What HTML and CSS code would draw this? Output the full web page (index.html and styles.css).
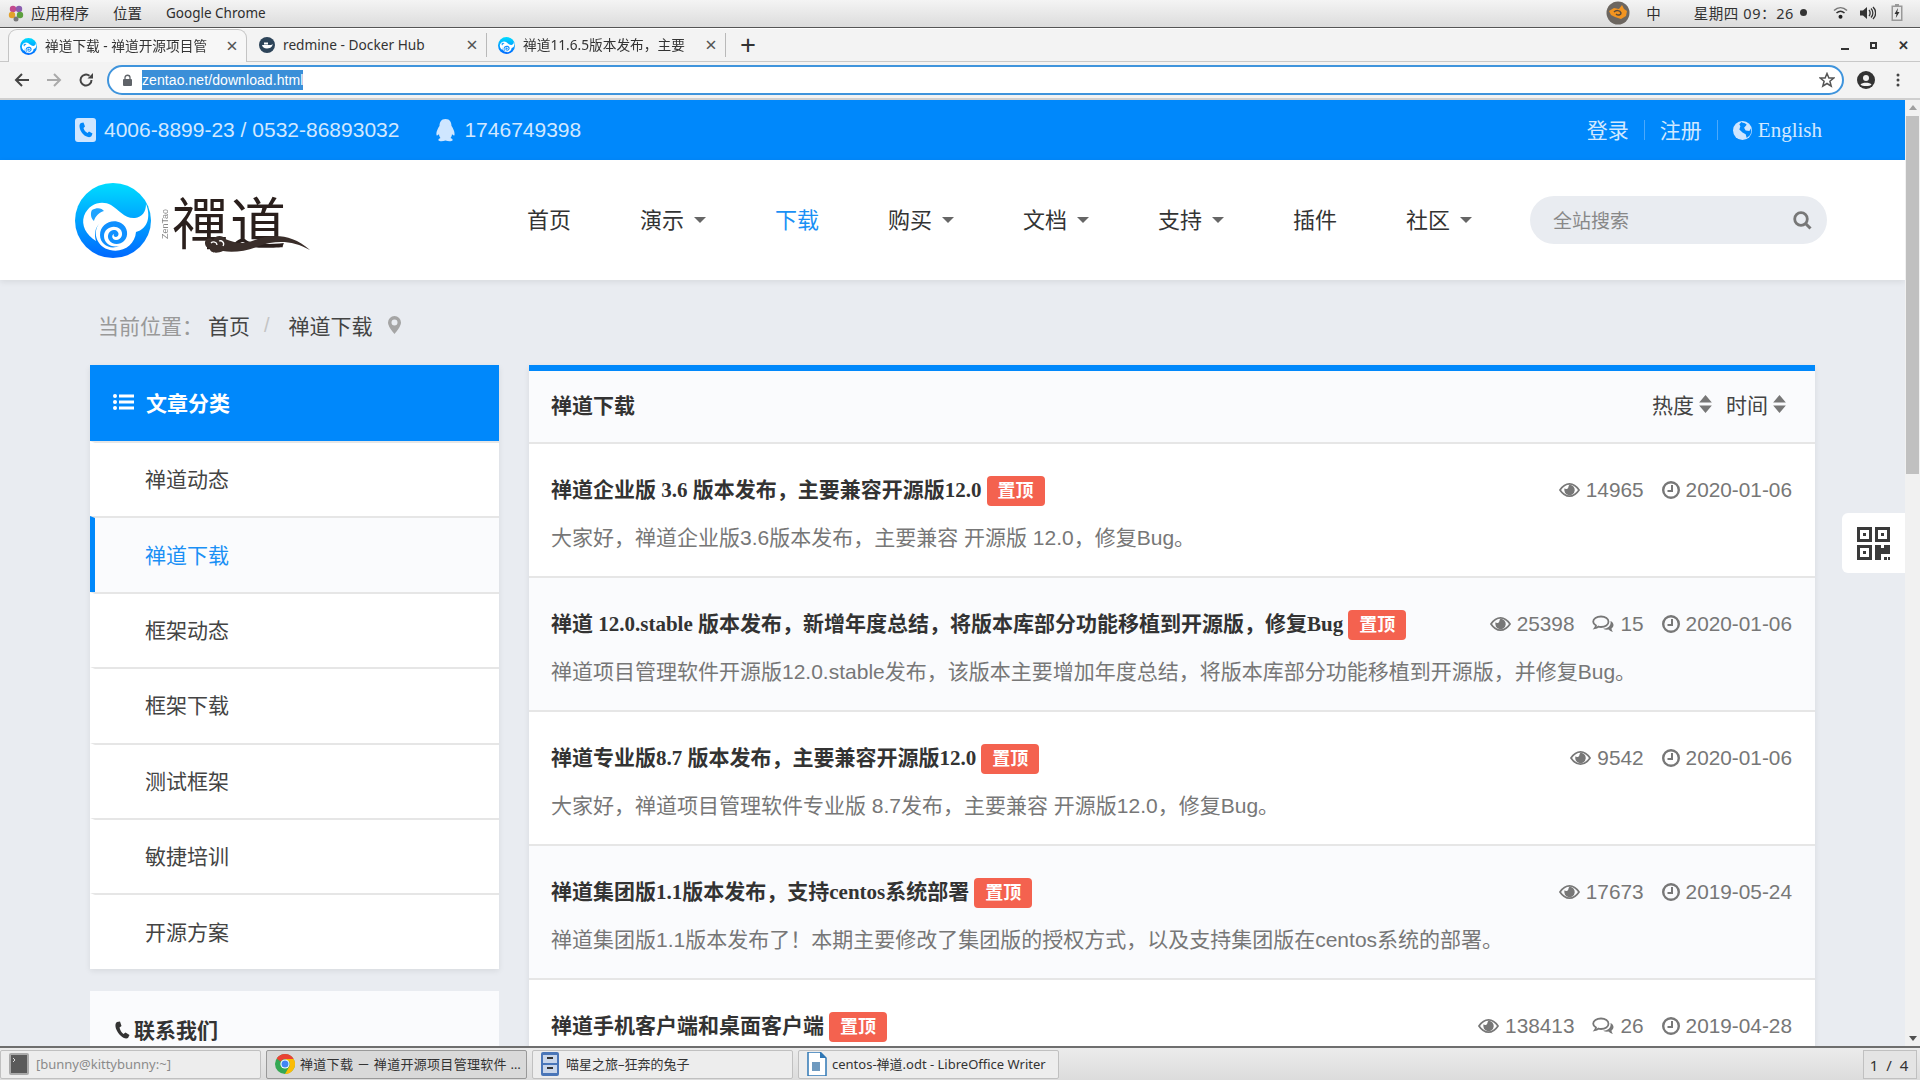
FILE: index.html
```html
<!DOCTYPE html>
<html lang="zh-CN">
<head>
<meta charset="utf-8">
<title>禅道下载</title>
<link rel="stylesheet" href="styles.css">
</head>
<body>
<svg class="defs" width="0" height="0" aria-hidden="true">
  <defs>
    <linearGradient id="zt" x1="0" y1="0" x2="0" y2="1">
      <stop offset="0" stop-color="#00dcff"/><stop offset="1" stop-color="#0068ff"/>
    </linearGradient>
    <symbol id="zt-logo" viewBox="0 0 76 75">
      <ellipse cx="38" cy="37.5" rx="38" ry="37.5" fill="url(#zt)"/>
      <path d="M9 33C14 20 27 17 36 22C44 27 50 36 60 35C67 34 71 29 71 21C76 33 73 46 61 49C60 62 48 70 35 67C22 64 17 50 24 41C20 45 19 52 21 58C11 52 6 42 9 33Z" fill="#fff"/>
      <path d="M17 27C22 24 27 25 29 28C25 29 20 33 19 38C16 36 15 30 17 27Z" fill="#20a4ff"/>
      <path d="M25 52C25 41 37 35 46 40C53 44 54 53 49 58C45 62 37 62 34 57C31 52 35 46 40 47C44 48 45 53 41 54C39 54 38 52 39 51C36 52 37 57 41 57C47 57 49 50 45 46C39 41 29 45 29 53C29 60 36 65 44 63C36 67 25 62 25 52Z" fill="#1090ff"/>
    </symbol>
    <symbol id="i-eye" viewBox="0 0 22 16">
      <path d="M1 8C4 3.500 7.500 1.500 11 1.500S18 3.500 21 8C18 12.500 14.500 14.500 11 14.500S4 12.500 1 8Z" fill="none" stroke="currentColor" stroke-width="1.800"/>
      <path d="M11 2.500A5.500 5.500 0 1 1 5.800 6.200C6.500 7.300 8.700 7.300 9.500 5.800C10 4.800 10 3.500 11 2.500Z" fill="currentColor"/>
    </symbol>
    <symbol id="i-chat" viewBox="0 0 22 18">
      <path d="M9 1.500C13.400 1.500 16.500 3.800 16.500 6.700S13.400 12 9 12C8 12 7.200 11.900 6.300 11.600C5.300 12.500 4 13 2.800 13.200C3.500 12.300 3.900 11.400 4 10.500C2.300 9.500 1.200 8.200 1.200 6.700C1.200 3.800 4.600 1.500 9 1.500Z" fill="none" stroke="currentColor" stroke-width="1.800"/>
      <path d="M18.500 6C20.500 7 21.500 8.500 21.500 10C21.500 11.500 20.700 12.600 19.500 13.500C19.600 14.800 20.200 16 21 17C19 16.600 17.500 15.700 16.500 14.600C15 14.900 12.700 14.700 11 13.700C15.500 13.800 19.500 11 18.500 6Z" fill="currentColor"/>
    </symbol>
    <symbol id="i-clock" viewBox="0 0 18 18">
      <circle cx="9" cy="9" r="7.800" fill="none" stroke="currentColor" stroke-width="2.400"/>
      <path d="M10 4V10H5.500" fill="none" stroke="currentColor" stroke-width="2"/>
    </symbol>
    <symbol id="i-sort" viewBox="0 0 12 17">
      <path d="M6 0L12 7H0ZM0 10H12L6 17Z" fill="currentColor"/>
    </symbol>
    <symbol id="f-chrome" viewBox="0 0 20 20">
      <circle cx="10" cy="10" r="10" fill="#34a853"/>
      <path d="M10 0A10 10 0 0 1 18.700 5H10A5 5 0 0 0 5.600 7.600L1.600 4.600A10 10 0 0 1 10 0Z" fill="#ea4335"/>
      <path d="M18.700 5A10 10 0 0 1 10 20L14.300 12.500A5 5 0 0 0 14.300 7.500L10 5Z" fill="#fbbc05"/>
      <circle cx="10" cy="10" r="4.600" fill="#fff"/><circle cx="10" cy="10" r="3.500" fill="#4285f4"/>
    </symbol>
  </defs>
</svg>

<header class="gnome">
  <div class="gnome-left">
    <svg class="foot" width="16" height="18" viewBox="0 0 16 18"><circle cx="5" cy="5" r="3.200" fill="#c34a8e"/><circle cx="11" cy="5" r="3.200" fill="#8a5db0"/><circle cx="4" cy="11" r="3.200" fill="#e2a12b"/><circle cx="12" cy="11" r="3.200" fill="#5c9f3d"/><circle cx="8" cy="15" r="2.500" fill="#777"/></svg>
    <span class="gnome-menu">应用程序</span>
    <span class="gnome-menu">位置</span>
    <span class="gnome-menu gnome-app">Google Chrome</span>
  </div>
  <div class="gnome-right">
    <svg class="tray-avatar" width="24" height="24" viewBox="0 0 24 24"><circle cx="12" cy="12" r="11.500" fill="#6c6660"/><path d="M3 10L8 7L13 8L16 4L18 8L21 10L20 15L15 18L9 16L5 14Z" fill="#f29420"/><path d="M8 11C10 9 14 9 15 12C15 14 12 15 10 13" fill="none" stroke="#5a4a3a" stroke-width="1.500"/></svg>
    <span class="tray-ime">中</span>
    <span class="tray-clock">星期四 09：26</span>
    <span class="tray-dot"></span>
    <svg class="tray-wifi" width="15" height="13" viewBox="0 0 15 13"><path d="M1 4.500C5 .8 10 .8 14 4.500" fill="none" stroke="#777" stroke-width="1.500"/><path d="M3.500 7C6 4.800 9 4.800 11.500 7" fill="none" stroke="#333" stroke-width="1.600"/><circle cx="7.500" cy="10.800" r="2" fill="#222"/></svg>
    <svg class="tray-sound" width="16" height="14" viewBox="0 0 16 14"><path d="M0 4.500H3L7 1V13L3 9.500H0Z" fill="#333"/><path d="M9 4C10.500 5.500 10.500 8.500 9 10M11 2.500C13.500 5 13.500 9 11 11.500M13 1C16.500 4.500 16.500 9.500 13 13" fill="none" stroke="#333" stroke-width="1.300"/></svg>
    <svg class="tray-battery" width="12" height="17" viewBox="0 0 12 17"><path d="M4 0H8V1.500H11.500V17H.5V1.500H4Z" fill="#999"/><rect x="2" y="3" width="8" height="12.500" fill="#e8e8e8"/><path d="M7 4L3.500 10H5.500L4.800 14L8.500 8H6.300Z" fill="#333"/></svg>
  </div>
</header>

<div class="chrome">
  <div class="tabstrip">
    <div class="tab tab-active">
      <svg class="favicon" width="17" height="17"><use href="#zt-logo"/></svg>
      <span class="tab-title tab-fade">禅道下载 - 禅道开源项目管</span>
      <span class="tab-x">×</span>
    </div>
    <div class="tab tab-two">
      <svg class="favicon" width="16" height="16" viewBox="0 0 16 16"><circle cx="8" cy="8" r="8" fill="#2d4459"/><path d="M3 8H11.500C12.500 8 13 7.500 13.500 7C13.800 8.500 12.500 11.500 8 11.500C5 11.500 3.500 10 3 8Z" fill="#fff"/><rect x="5" y="5.500" width="4" height="2" fill="#fff"/></svg>
      <span class="tab-title">redmine - Docker Hub</span>
      <span class="tab-x">×</span>
    </div>
    <div class="tab tab-three">
      <svg class="favicon" width="17" height="17"><use href="#zt-logo"/></svg>
      <span class="tab-title tab-fade">禅道11.6.5版本发布，主要</span>
      <span class="tab-x">×</span>
    </div>
    <span class="tab-new">+</span>
    <div class="winbtns">
      <span class="win-min"></span>
      <span class="win-max"></span>
      <span class="win-close">✕</span>
    </div>
  </div>
  <div class="toolbar">
    <svg class="tool-back" width="16" height="16" viewBox="0 0 16 16"><path d="M15 8H2M8 2L2 8L8 14" fill="none" stroke="#444" stroke-width="2"/></svg>
    <svg class="tool-fwd" width="16" height="16" viewBox="0 0 16 16"><path d="M1 8H14M8 2L14 8L8 14" fill="none" stroke="#aaa" stroke-width="2"/></svg>
    <svg class="tool-reload" width="16" height="16" viewBox="0 0 16 16"><path d="M13.500 8A5.500 5.500 0 1 1 11.500 3.800" fill="none" stroke="#444" stroke-width="2"/><path d="M9.500 6.500H15V1Z" fill="#444"/></svg>
    <div class="omnibox">
      <svg class="lock" width="9" height="12" viewBox="0 0 9 12"><path d="M2 5V3.500C2 .5 7 .5 7 3.500V5" fill="none" stroke="#5f6368" stroke-width="1.300"/><rect y="5" width="9" height="7" rx="1" fill="#5f6368"/></svg>
      <span class="url">zentao.net/download.html</span>
      <svg class="star" width="16" height="16" viewBox="0 0 16 16"><path d="M8 1.500L9.900 6H14.800L10.900 9.200L12.200 14.200L8 11.500L3.800 14.200L5.100 9.200L1.200 6H6.100Z" fill="none" stroke="#555" stroke-width="1.500"/></svg>
    </div>
    <svg class="tool-user" width="18" height="18" viewBox="0 0 18 18"><circle cx="9" cy="9" r="9" fill="#333"/><circle cx="9" cy="7" r="3" fill="#f2f2f2"/><path d="M3.500 13.500C5 11 13 11 14.500 13.500C13 15.500 5 15.500 3.500 13.500Z" fill="#f2f2f2"/></svg>
    <svg class="tool-menu" width="4" height="14" viewBox="0 0 4 14"><circle cx="2" cy="2" r="1.500" fill="#444"/><circle cx="2" cy="7" r="1.500" fill="#444"/><circle cx="2" cy="12" r="1.500" fill="#444"/></svg>
  </div>
</div>

<div class="viewport">
  <div class="page">
    <div class="utilbar">
      <div class="util-left">
        <svg class="u-icon" width="21" height="24" viewBox="0 0 21 24"><rect width="21" height="24" rx="3" fill="#cfe6ff"/><path d="M6 5L8.500 4.500L10 8.500L8.500 10C9 12 10.500 14 12.500 15L14 13.500L17.500 15.500L16.500 18C15.500 19.500 13 19.500 10.500 18C7 16 4.500 11.500 4.500 8C4.500 6.500 5 5.500 6 5Z" fill="#0088fb"/></svg>
        <span class="u-phone">4006-8899-23 / 0532-86893032</span>
        <svg class="u-icon u-qq" width="21" height="24" viewBox="0 0 21 24"><path d="M10.500 1C15 1 16.500 4.500 16.500 8C18 10 20 14 19.500 17C19 18.500 17.500 16.500 17 16C17 18 16 19.500 15.500 20C17 20.500 18 21.500 17.500 22.500C16.500 23.500 13 23.500 10.500 22.500C8 23.500 4.500 23.500 3.500 22.500C3 21.500 4 20.500 5.500 20C5 19.500 4 18 4 16C3.500 16.500 2 18.500 1.500 17C1 14 3 10 4.500 8C4.500 4.500 6 1 10.500 1Z" fill="#cfe6ff"/></svg>
        <span class="u-qqnum">1746749398</span>
      </div>
      <div class="util-right">
        <span class="u-link">登录</span>
        <span class="u-sep"></span>
        <span class="u-link">注册</span>
        <span class="u-sep"></span>
        <svg class="u-globe" width="19" height="19" viewBox="0 0 18 18"><circle cx="9" cy="9" r="9" fill="#cfe6ff"/><path d="M8 1C9.500 2 12 2 13 3.500L10.500 6.500L12 9L15.500 9.500L17 7C17.500 9 17.500 11 16 13.500L13 16L12 12.500L9 11L6 8L7 5L6 3Z" fill="#0088fb"/></svg>
        <span class="u-lang">English</span>
      </div>
    </div>

    <div class="siteheader">
      <div class="logo">
        <svg class="logo-mark" width="76" height="75"><use href="#zt-logo"/></svg>
        <span class="logo-en">ZenTao</span>
        <span class="logo-cn">禪道</span>
        <svg class="logo-cloud" width="108" height="30" viewBox="0 0 108 30"><path d="M2 18C2 13 8 12 10 15C12 10 20 10 22 14C32 18 40 20 52 15C68 9 88 8 107 25C90 15 72 15 56 21C44 26 30 28 20 26C14 29 6 28 7 23C4 23 2 21 2 18Z" fill="#3a2e2a"/><path d="M8 18C10 16 14 17 14 20M16 16C19 15 22 18 20 21" fill="none" stroke="#fff" stroke-width="1.300"/></svg>
      </div>
      <nav class="nav">
        <span class="nav-item">首页</span>
        <span class="nav-item">演示<i class="caret"></i></span>
        <span class="nav-item nav-on">下载</span>
        <span class="nav-item">购买<i class="caret"></i></span>
        <span class="nav-item">文档<i class="caret"></i></span>
        <span class="nav-item">支持<i class="caret"></i></span>
        <span class="nav-item">插件</span>
        <span class="nav-item">社区<i class="caret"></i></span>
      </nav>
      <div class="search">
        <span class="search-ph">全站搜索</span>
        <svg width="19" height="19" viewBox="0 0 19 19"><circle cx="8" cy="8" r="6.300" fill="none" stroke="#777" stroke-width="2.800"/><path d="M12.500 12.500L17.500 17.500" stroke="#777" stroke-width="3"/></svg>
      </div>
    </div>

    <div class="crumbs">
      <span class="crumb-label">当前位置：</span>
      <span class="crumb-link">首页</span>
      <span class="crumb-sep">/</span>
      <span class="crumb-link">禅道下载</span>
      <svg class="crumb-pin" width="13" height="18" viewBox="0 0 13 18"><path fill-rule="evenodd" d="M6.500 0A6.500 6.500 0 0 1 13 6.500C13 10 9 15 6.500 18C4 15 0 10 0 6.500A6.500 6.500 0 0 1 6.500 0ZM6.500 3.500A3 3 0 1 0 6.500 9.500A3 3 0 1 0 6.500 3.500Z" fill="#a5a5a5"/></svg>
    </div>

    <div class="content">
      <aside class="side">
        <div class="card">
          <div class="card-head">
            <svg width="21" height="16" viewBox="0 0 21 16"><circle cx="2" cy="2" r="2" fill="#fff"/><circle cx="2" cy="8" r="2" fill="#fff"/><circle cx="2" cy="14" r="2" fill="#fff"/><rect x="6" y=".5" width="15" height="3" fill="#fff"/><rect x="6" y="6.500" width="15" height="3" fill="#fff"/><rect x="6" y="12.500" width="15" height="3" fill="#fff"/></svg>
            <span>文章分类</span>
          </div>
          <div class="side-item">禅道动态</div>
          <div class="side-item side-on">禅道下载</div>
          <div class="side-item">框架动态</div>
          <div class="side-item">框架下载</div>
          <div class="side-item">测试框架</div>
          <div class="side-item">敏捷培训</div>
          <div class="side-item">开源方案</div>
        </div>
        <div class="contact">
          <svg width="16" height="18" viewBox="0 0 16 18"><path d="M3 1L6 .5L7.500 5L5.500 6.500C6 9 7.500 11.500 9.500 13L11.500 11.500L15.500 14L14 17C12 18 9 17 6.500 14.500C3 11 1 6.500 1.500 3.500C1.700 2.500 2.200 1.500 3 1Z" fill="#333"/></svg>
          <span>联系我们</span>
        </div>
      </aside>

      <main class="list">
        <div class="list-head">
          <span class="list-title">禅道下载</span>
          <div class="sorts">
            <span class="sort">热度<svg class="sort-ic" width="13" height="18"><use href="#i-sort"/></svg></span>
            <span class="sort">时间<svg class="sort-ic" width="13" height="18"><use href="#i-sort"/></svg></span>
          </div>
        </div>

        <article class="post">
          <div class="post-top">
            <h3 class="post-title">禅道企业版 3.6 版本发布，主要兼容开源版12.0</h3><span class="badge">置顶</span>
            <div class="stats">
              <span class="stat"><svg width="21" height="16"><use href="#i-eye"/></svg>14965</span>
              <span class="stat"><svg width="18" height="18"><use href="#i-clock"/></svg>2020-01-06</span>
            </div>
          </div>
          <p class="post-desc">大家好，禅道企业版3.6版本发布，主要兼容 开源版 12.0，修复Bug。</p>
        </article>

        <article class="post">
          <div class="post-top">
            <h3 class="post-title">禅道 12.0.stable 版本发布，新增年度总结，将版本库部分功能移植到开源版，修复Bug</h3><span class="badge">置顶</span>
            <div class="stats">
              <span class="stat"><svg width="21" height="16"><use href="#i-eye"/></svg>25398</span>
              <span class="stat"><svg class="ic-chat" width="22" height="18"><use href="#i-chat"/></svg>15</span>
              <span class="stat"><svg width="18" height="18"><use href="#i-clock"/></svg>2020-01-06</span>
            </div>
          </div>
          <p class="post-desc">禅道项目管理软件开源版12.0.stable发布，该版本主要增加年度总结，将版本库部分功能移植到开源版，并修复Bug。</p>
        </article>

        <article class="post">
          <div class="post-top">
            <h3 class="post-title">禅道专业版8.7 版本发布，主要兼容开源版12.0</h3><span class="badge">置顶</span>
            <div class="stats">
              <span class="stat"><svg width="21" height="16"><use href="#i-eye"/></svg>9542</span>
              <span class="stat"><svg width="18" height="18"><use href="#i-clock"/></svg>2020-01-06</span>
            </div>
          </div>
          <p class="post-desc">大家好，禅道项目管理软件专业版 8.7发布，主要兼容 开源版12.0，修复Bug。</p>
        </article>

        <article class="post">
          <div class="post-top">
            <h3 class="post-title">禅道集团版1.1版本发布，支持centos系统部署</h3><span class="badge">置顶</span>
            <div class="stats">
              <span class="stat"><svg width="21" height="16"><use href="#i-eye"/></svg>17673</span>
              <span class="stat"><svg width="18" height="18"><use href="#i-clock"/></svg>2019-05-24</span>
            </div>
          </div>
          <p class="post-desc">禅道集团版1.1版本发布了！本期主要修改了集团版的授权方式，以及支持集团版在centos系统的部署。</p>
        </article>

        <article class="post">
          <div class="post-top">
            <h3 class="post-title">禅道手机客户端和桌面客户端</h3><span class="badge">置顶</span>
            <div class="stats">
              <span class="stat"><svg width="21" height="16"><use href="#i-eye"/></svg>138413</span>
              <span class="stat"><svg class="ic-chat" width="22" height="18"><use href="#i-chat"/></svg>26</span>
              <span class="stat"><svg width="18" height="18"><use href="#i-clock"/></svg>2019-04-28</span>
            </div>
          </div>
        </article>
      </main>
    </div>

    <div class="qr">
      <svg width="33" height="33" viewBox="0 0 33 33">
        <path fill-rule="evenodd" d="M0 0H15V15H0ZM3 3V12H12V3ZM18 0H33V15H18ZM21 3V12H30V3ZM0 18H15V33H0ZM3 21V30H12V21Z" fill="#3a3a3a"/>
        <path d="M6 6H9V9H6ZM24 6H27V9H24ZM6 24H9V27H6ZM18 18H24V21H27V18H33V27H24V33H18ZM27 30H30V33H27ZM31 30H33V33H31Z" fill="#3a3a3a"/>
      </svg>
    </div>
  </div>
  <div class="scrollbar">
    <span class="sb-up"></span>
    <span class="sb-thumb"></span>
    <span class="sb-down"></span>
  </div>
</div>

<footer class="taskbar">
  <div class="task task-term">
    <svg width="20" height="22" viewBox="0 0 20 22"><rect width="20" height="22" rx="2" fill="#aaa"/><rect x="2" y="2" width="16" height="18" fill="#5a5a5a"/><path d="M4 5L6 7L4 9" fill="none" stroke="#ddd"/></svg>
    <span class="task-dim">[bunny@kittybunny:~]</span>
  </div>
  <div class="task task-on">
    <svg width="20" height="20"><use href="#f-chrome"/></svg>
    <span>禅道下载 － 禅道开源项目管理软件 …</span>
  </div>
  <div class="task task-files">
    <svg width="18" height="24" viewBox="0 0 18 24"><rect width="18" height="24" rx="2" fill="#4a76b8"/><rect x="2" y="3" width="14" height="8" fill="#c9d6ea"/><rect x="2" y="13" width="14" height="8" fill="#c9d6ea"/><rect x="6" y="5" width="6" height="2" fill="#333"/><rect x="6" y="15" width="6" height="2" fill="#333"/></svg>
    <span>喵星之旅–狂奔的兔子</span>
  </div>
  <div class="task">
    <svg width="20" height="24" viewBox="0 0 20 24"><path d="M1 0H13L19 6V24H1Z" fill="#fff" stroke="#2f77b5" stroke-width="1.500"/><path d="M13 0L19 6H13Z" fill="#2f77b5"/><rect x="5" y="10" width="8" height="9" fill="#6f9abf"/></svg>
    <span>centos-禅道.odt - LibreOffice Writer</span>
  </div>
  <span class="pager">1 / 4</span>
</footer>
</body>
</html>
```
FILE: styles.css
```css
* { box-sizing: border-box; }
html, body { margin: 0; height: 100%; overflow: hidden; }
body {
  display: flex;
  flex-direction: column;
  height: 1080px;
  font-family: "Liberation Sans", "Noto Sans CJK SC", sans-serif;
  color: #333;
  background: #e9ecf1;
}
.defs { position: absolute; }

/* GNOME top bar */
.gnome {
  flex: none;
  height: 28px;
  display: flex;
  justify-content: space-between;
  align-items: center;
  padding: 0 17px 2px 8px;
  background: linear-gradient(#f4f4f4, #dcdcdc);
  border-bottom: 1px solid #555;
  font: 14.500px "Noto Sans", "Noto Sans CJK SC", sans-serif;
  color: #2e2e2e;
}
.gnome-left, .gnome-right { display: flex; align-items: center; }
.foot { margin-right: 7px; }
.gnome-menu { margin-right: 24px; white-space: nowrap; }
.gnome-app { font-size: 13.500px; }
.tray-avatar { margin-right: 16px; }
.tray-ime { margin-right: 33px; }
.tray-clock { white-space: nowrap; letter-spacing: .6px; color: #333; }
.tray-dot { width: 7px; height: 7px; border-radius: 50%; background: #333; margin-left: 6px; }
.tray-wifi { margin-left: 26px; }
.tray-sound { margin-left: 12px; }
.tray-battery { margin-left: 15px; }

/* Browser chrome */
.chrome { flex: none; height: 72px; background: #f3f3f3; border-bottom: 2px solid #cfcfcf; border-top: 1px solid #fff; }
.tabstrip {
  height: 33px;
  display: flex;
  align-items: stretch;
  padding-left: 8px;
  border-bottom: 1px solid #c8c8c8;
  font: 13.700px "Noto Sans", "Noto Sans CJK SC", sans-serif;
  color: #333;
}
.tab { display: flex; align-items: center; width: 239px; padding: 0 5px 0 11px; position: relative; }
.tab-active { background: #f7f7f7; border: 1px solid #c4c4c4; border-bottom: 0; border-radius: 9px 9px 0 0; margin-bottom: -1px; }
.tab-two { width: 240px; padding-left: 12px; border-right: 1px solid #b9b9b9; height: 24px; align-self: center; }
.tab-three { padding-left: 11px; border-right: 1px solid #b9b9b9; height: 24px; align-self: center; }
.favicon { flex: none; margin-right: 8px; }
.tab-title { flex: 1; min-width: 0; white-space: nowrap; padding-bottom: 2px; }
.tab-fade { -webkit-mask-image: linear-gradient(90deg, #000 88%, rgba(0, 0, 0, .25) 100%); mask-image: linear-gradient(90deg, #000 88%, rgba(0, 0, 0, .25) 100%); }
.tab-x { flex: none; width: 18px; font-size: 20px; line-height: 1; text-align: center; color: #555; }
.tab-new { margin-left: 14px; font-size: 28px; line-height: 30px; color: #333; }
.winbtns { margin-left: auto; display: flex; align-items: center; gap: 21px; margin-right: 11px; }
.win-min { width: 8px; height: 2px; background: #333; margin-top: 8px; }
.win-max { width: 7px; height: 7px; border: 2px solid #333; }
.win-close { font-size: 13px; font-weight: bold; color: #333; }
.toolbar { height: 36px; display: flex; align-items: center; padding-left: 14px; }
.tool-fwd { margin-left: 16px; }
.tool-reload { margin-left: 16px; }
.omnibox {
  width: 1737px;
  height: 30px;
  margin-left: 13px;
  display: flex;
  align-items: center;
  padding: 0 7px 0 14px;
  background: #fff;
  border: 2px solid #3f94dc;
  border-radius: 15px;
}
.lock { flex: none; }
.url { margin-left: 10px; height: 20px; line-height: 20px; background: #3b8fd8; color: #fff; font-size: 14px; letter-spacing: .08px; }
.star { margin-left: auto; }
.tool-user { margin-left: 13px; }
.tool-menu { margin-left: 21px; }

/* Page */
.viewport { flex: none; height: 946px; display: flex; overflow: hidden; }
.page { flex: 1; min-width: 0; position: relative; background: #e9ecf1; overflow: hidden; }
.scrollbar { flex: none; width: 15px; background: #f1f1f1; display: flex; flex-direction: column; align-items: center; position: relative; }
.sb-up { margin-top: 5px; border: 4px solid transparent; border-top: 0; border-bottom: 5px solid #a0a0a0; }
.sb-thumb { width: 13px; height: 358px; background: #c0c0c0; margin-top: 6px; }
.sb-down { margin-top: auto; margin-bottom: 5px; border: 4px solid transparent; border-bottom: 0; border-top: 5px solid #505050; }

.utilbar { height: 60px; display: flex; justify-content: space-between; align-items: center; padding: 0 83px 0 75px; background: #0088fb; color: #d2e8ff; font-size: 21px; }
.util-left, .util-right { display: flex; align-items: center; }
.u-phone { margin-left: 8px; }
.u-qq { margin-left: 36px; }
.u-qqnum { margin-left: 8px; }
.u-link { font: 21px "Liberation Serif", "Noto Sans CJK SC", serif; padding-bottom: 2px; }
.u-sep { width: 1px; height: 20px; background: #4ca9fb; margin: 0 15px; }
.u-globe { margin-right: 6px; }
.u-lang { font: 21px "Liberation Serif", "Noto Sans CJK SC", serif; padding-top: 1px; }

.siteheader { height: 120px; display: flex; align-items: center; padding: 0 78px 0 75px; background: #fff; box-shadow: 0 2px 6px rgba(0, 0, 0, .08); position: relative; }
.logo { position: relative; display: flex; align-items: center; width: 232px; flex: none; }
.logo-en { writing-mode: vertical-rl; transform: rotate(180deg); font-size: 9px; color: #888; margin-left: 9px; margin-top: 8px; }
.logo-cn { font: 400 56px/60px "Noto Sans CJK TC", sans-serif; color: #2a1f1c; margin-left: 2px; letter-spacing: 2px; white-space: nowrap; }
.logo-cloud { position: absolute; left: 128px; top: 42px; }
.nav { display: flex; gap: 69px; margin-left: 220px; padding-bottom: 5px; font: 22px "Noto Sans CJK SC", sans-serif; color: #333; }
.nav-item { display: flex; align-items: center; white-space: nowrap; }
.nav-on { color: #1a90f5; }
.caret { width: 0; height: 0; margin-left: 10px; margin-top: 4px; border: 6px solid transparent; border-top: 6px solid #666; border-bottom: 0; }
.search { margin-left: auto; width: 297px; height: 48px; display: flex; align-items: center; justify-content: space-between; padding: 0 15px 0 23px; background: #e9ecf1; border-radius: 24px; }
.search-ph { font-size: 19px; color: #888; padding-bottom: 2px; }

.crumbs { height: 85px; display: flex; align-items: center; padding: 5px 0 0 98px; font-size: 21px; color: #444; }
.crumb-label { color: #999; width: 110px; }
.crumb-sep { color: #c4c4c4; margin: 0 19px 0 14px; font-size: 20px; }
.crumb-pin { margin-left: 15px; }

.content { display: flex; gap: 30px; padding-left: 90px; align-items: flex-start; }
.side { flex: none; width: 409px; }
.card { background: #fff; box-shadow: 0 2px 6px rgba(0, 0, 0, .08); }
.card-head { height: 76px; display: flex; align-items: center; gap: 12px; padding: 0 0 3px 23px; background: #0088fb; color: #fff; font-size: 21px; font-weight: bold; }
.side-item { height: 75.400px; display: flex; align-items: center; padding: 0 0 3px 50px; border-top: 2px solid #e6e6e6; border-left: 5px solid transparent; font-size: 21px; color: #444; }
.side-on { background: #fafbfd; color: #1a90f5; border-left-color: #0088fb; }
.contact { margin-top: 22px; height: 120px; padding: 23px 0 0 24px; display: flex; align-items: flex-start; gap: 4px; background: #fafbfd; font-size: 21px; font-weight: bold; color: #333; }
.contact svg { margin-top: 7px; }

.list { flex: none; width: 1286px; background: #fff; border-top: 6px solid #0088fb; box-shadow: 0 2px 6px rgba(0, 0, 0, .08); }
.list-head { height: 73px; display: flex; align-items: center; justify-content: space-between; padding: 0 29px 5px 22px; background: #fafbfd; border-bottom: 2px solid #e6e6e6; font-size: 21px; }
.list-title { font-weight: bold; }
.sorts { display: flex; gap: 14px; }
.sort { display: flex; align-items: center; gap: 5px; color: #444; }
.sort-ic { color: #777; }
.post { height: 134px; padding: 31px 23px 0 22px; border-bottom: 2px solid #e6e6e6; }
.post:nth-of-type(even) { background: #fafbfd; }
.post-top { display: flex; align-items: center; height: 30px; }
.post-title { margin: 0; font: bold 21px/30px "Liberation Serif", "Noto Sans CJK SC", serif; color: #333; white-space: nowrap; }
.badge { flex: none; width: 58px; height: 30px; margin: 2px 0 0 5px; border-radius: 4px; background: #f4624f; color: #fff; font-size: 18px; line-height: 30px; text-align: center; font-weight: bold; }
.stats { margin-left: auto; display: flex; gap: 18px; font-size: 20.800px; color: #777; white-space: nowrap; }
.stat { display: flex; align-items: center; gap: 6px; }
.post-desc { margin: 18px 0 0; font-size: 21px; line-height: 30px; color: #777; white-space: nowrap; }

.qr { position: absolute; right: 0; top: 413px; width: 63px; height: 60px; display: flex; align-items: center; justify-content: center; background: #fff; border-radius: 6px 0 0 6px; }

/* Task bar */
.taskbar {
  flex: none;
  height: 34px;
  display: flex;
  align-items: stretch;
  gap: 5px;
  padding: 2px 3px 1px 0;
  background: linear-gradient(#ececec, #dcdcdc);
  border-top: 2px solid #6e6e6e;
  font: 13px "Noto Sans", "Noto Sans CJK SC", sans-serif;
  color: #333;
}
.task { width: 261px; display: flex; align-items: center; gap: 5px; padding: 0 0 2px 8px; background: #ededed; border: 1px solid #c0c0c0; border-radius: 2px; white-space: nowrap; overflow: hidden; }
.task-term { gap: 7px; }
.task-files { gap: 7px; }
.task-on { background: #d9d9d9; border-color: #999; letter-spacing: .3px; }
.task-dim { color: #8a8a8a; }
.pager { margin-left: auto; width: 54px; display: flex; align-items: center; justify-content: center; border: 1px solid #c0c0c0; background: #e4e4e4; font-size: 15px; letter-spacing: 2px; }
```
